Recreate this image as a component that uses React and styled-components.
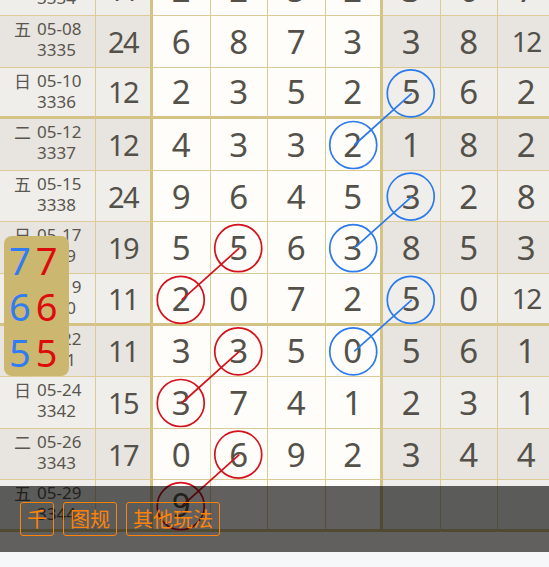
import React from 'react';
import styled, { createGlobalStyle } from 'styled-components';

// chart geometry (the list is scrolled so row 3334 is mostly hidden)
const ROW_H = 51.6;
const SCROLL = -35.6;
const COL_W = 57.5;
const DIGIT_LEFT = 153;

const rows = [
  { wd: '二', date: '05-06', no: '3334', sum: 11, nums: [2, 2, 5, 2], ext: [3, 6, 7] },
  { wd: '五', date: '05-08', no: '3335', sum: 24, nums: [6, 8, 7, 3], ext: [3, 8, 12] },
  { wd: '日', date: '05-10', no: '3336', sum: 12, nums: [2, 3, 5, 2], ext: [5, 6, 2] },
  { wd: '二', date: '05-12', no: '3337', sum: 12, nums: [4, 3, 3, 2], ext: [1, 8, 2] },
  { wd: '五', date: '05-15', no: '3338', sum: 24, nums: [9, 6, 4, 5], ext: [3, 2, 8] },
  { wd: '日', date: '05-17', no: '3339', sum: 19, nums: [5, 5, 6, 3], ext: [8, 5, 3] },
  { wd: '二', date: '05-19', no: '3340', sum: 11, nums: [2, 0, 7, 2], ext: [5, 0, 12] },
  { wd: '五', date: '05-22', no: '3341', sum: 11, nums: [3, 3, 5, 0], ext: [5, 6, 1] },
  { wd: '日', date: '05-24', no: '3342', sum: 15, nums: [3, 7, 4, 1], ext: [2, 3, 1] },
  { wd: '二', date: '05-26', no: '3343', sum: 17, nums: [0, 6, 9, 2], ext: [3, 4, 4] },
  { wd: '五', date: '05-29', no: '3344', sum: '', nums: [9, '', '', ''], ext: ['', '', ''] },
];

// [row, col] pairs joined by a line
const links = [
  { color: '#2b7bec', from: [2, 4], to: [3, 3] },
  { color: '#2b7bec', from: [4, 4], to: [5, 3] },
  { color: '#2b7bec', from: [6, 4], to: [7, 3] },
  { color: '#d3121c', from: [5, 1], to: [6, 0] },
  { color: '#d3121c', from: [7, 1], to: [8, 0] },
  { color: '#d3121c', from: [9, 1], to: [10, 0] },
];

const cx = (col) => DIGIT_LEFT + COL_W * col + COL_W / 2;
const cy = (row) => SCROLL + ROW_H * row + ROW_H / 2;

const GlobalStyle = createGlobalStyle`
  html, body {
    margin: 0;
    padding: 0;
    background: #f6f7f8;
  }
  body {
    font-family: "Noto Sans", "Noto Sans CJK SC", sans-serif;
  }
`;

const App = () => {
  return (
    <Page>
      <GlobalStyle />
      <ChartArea>
        <Table>
          {rows.map((r, i) => {
            const dark = i % 2 === 1;
            const thick = i % 4 === 2;
            return (
              <React.Fragment key={r.no}>
                <DateCell $dark={dark} $thick={thick}>
                  <Weekday>{r.wd}</Weekday>
                  <DateLines>
                    <span>{r.date}</span>
                    <span>{r.no}</span>
                  </DateLines>
                </DateCell>
                <SumCell $dark={dark} $thick={thick}>{r.sum}</SumCell>
                {r.nums.map((n, k) => (
                  <NumCell key={'n' + k} $thick={thick} $edge={k === 3}>{n}</NumCell>
                ))}
                {r.ext.map((n, k) => (
                  <NumCell key={'e' + k} $side $dark={dark} $thick={thick} $small={String(n).length > 1}>
                    {n}
                  </NumCell>
                ))}
              </React.Fragment>
            );
          })}
        </Table>

        <Trend width="549" height="552">
          {links.map((l, i) => (
            <g key={i} stroke={l.color} strokeWidth="1.7" fill="none">
              <line x1={cx(l.from[1])} y1={cy(l.from[0])} x2={cx(l.to[1])} y2={cy(l.to[0])} />
              <circle cx={cx(l.from[1]) - 1} cy={cy(l.from[0])} r="23.5" />
              <circle cx={cx(l.to[1]) - 1} cy={cy(l.to[0])} r="23.5" />
            </g>
          ))}
        </Trend>

        <Badge>
          <BadgeRow><Blue>7</Blue><Red>7</Red></BadgeRow>
          <BadgeRow><Blue>6</Blue><Red>6</Red></BadgeRow>
          <BadgeRow><Blue>5</Blue><Red>5</Red></BadgeRow>
        </Badge>

        <ActionBar>
          <ActionButton>千</ActionButton>
          <ActionButton>图规</ActionButton>
          <ActionButton>其他玩法</ActionButton>
        </ActionBar>
      </ChartArea>
      <Footer />
    </Page>
  );
};

const Page = styled.div`
  width: 549px;
  height: 567px;
  overflow: hidden;
  display: flex;
  flex-direction: column;
`;

const ChartArea = styled.div`
  position: relative;
  height: 552px;
  flex: none;
  overflow: hidden;
  background: #fffdf9;
`;

const Table = styled.div`
  display: grid;
  grid-template-columns: 96px 57px repeat(7, ${COL_W}px);
  grid-auto-rows: ${ROW_H}px;
  margin-top: ${SCROLL}px;
  width: max-content;
  color: #53514a;
`;

const Cell = styled.div`
  box-sizing: border-box;
  border-right: 1px solid #dccb95;
  border-bottom: ${(p) => (p.$thick ? '3px solid #d5c386' : '1px solid #dccb95')};
  background: ${(p) => (p.$dark ? '#e8e5e0' : '#f0eeea')};
  display: flex;
  align-items: center;
  justify-content: center;
`;

const DateCell = styled(Cell)`
  justify-content: flex-start;
  align-items: flex-start;
  padding: 2px 0 0 14px;
  gap: 6px;
  font-family: "Noto Sans", "Noto Sans CJK SC", sans-serif;
  font-size: 17px;
  line-height: 21px;
  color: #58564e;
`;

const Weekday = styled.span`
  font-family: "Noto Sans CJK SC", sans-serif;
  line-height: 21px;
`;

const DateLines = styled.div`
  display: flex;
  flex-direction: column;
`;

const SumCell = styled(Cell)`
  border-right: 3px solid #d5c386;
  font-size: 29px;
  letter-spacing: -1.5px;
`;

const NumCell = styled(Cell)`
  background: ${(p) => (!p.$side ? '#fffdf9' : p.$dark ? '#e8e5e0' : '#f0eeea')};
  border-right: ${(p) => (p.$edge ? '3px solid #d5c386' : '1px solid #dccb95')};
  font-size: ${(p) => (p.$small ? '28px' : '33px')};
  letter-spacing: ${(p) => (p.$small ? '-1.5px' : '0')};
`;

const Trend = styled.svg`
  position: absolute;
  top: 0;
  left: 0;
  pointer-events: none;
`;

const Badge = styled.div`
  position: absolute;
  left: 4px;
  top: 236px;
  width: 65px;
  height: 140px;
  box-sizing: border-box;
  padding: 0 0 0 5px;
  border-radius: 8px;
  background: #cbb76f;
  display: flex;
  flex-direction: column;
  justify-content: center;
  font-size: 38px;
  line-height: 46px;
`;

const BadgeRow = styled.div`
  display: flex;
  gap: 5px;
`;

const Blue = styled.span`
  color: #2f7cf4;
`;

const Red = styled.span`
  color: #dc0c0c;
`;

const ActionBar = styled.div`
  position: absolute;
  left: 0;
  right: 0;
  bottom: 0;
  height: 66px;
  box-sizing: border-box;
  padding: 0 20px;
  background: rgba(0, 0, 0, 0.62);
  display: flex;
  align-items: center;
  gap: 9px;
`;

const ActionButton = styled.div`
  height: 34px;
  box-sizing: border-box;
  padding: 0 6px;
  border: 1.5px solid #ff8306;
  border-radius: 3px;
  color: #ff8306;
  font-family: "Noto Sans CJK SC", sans-serif;
  font-size: 20px;
  line-height: 31px;
`;

const Footer = styled.div`
  flex: 1;
  background: #f6f7f8;
`;

export default App;
